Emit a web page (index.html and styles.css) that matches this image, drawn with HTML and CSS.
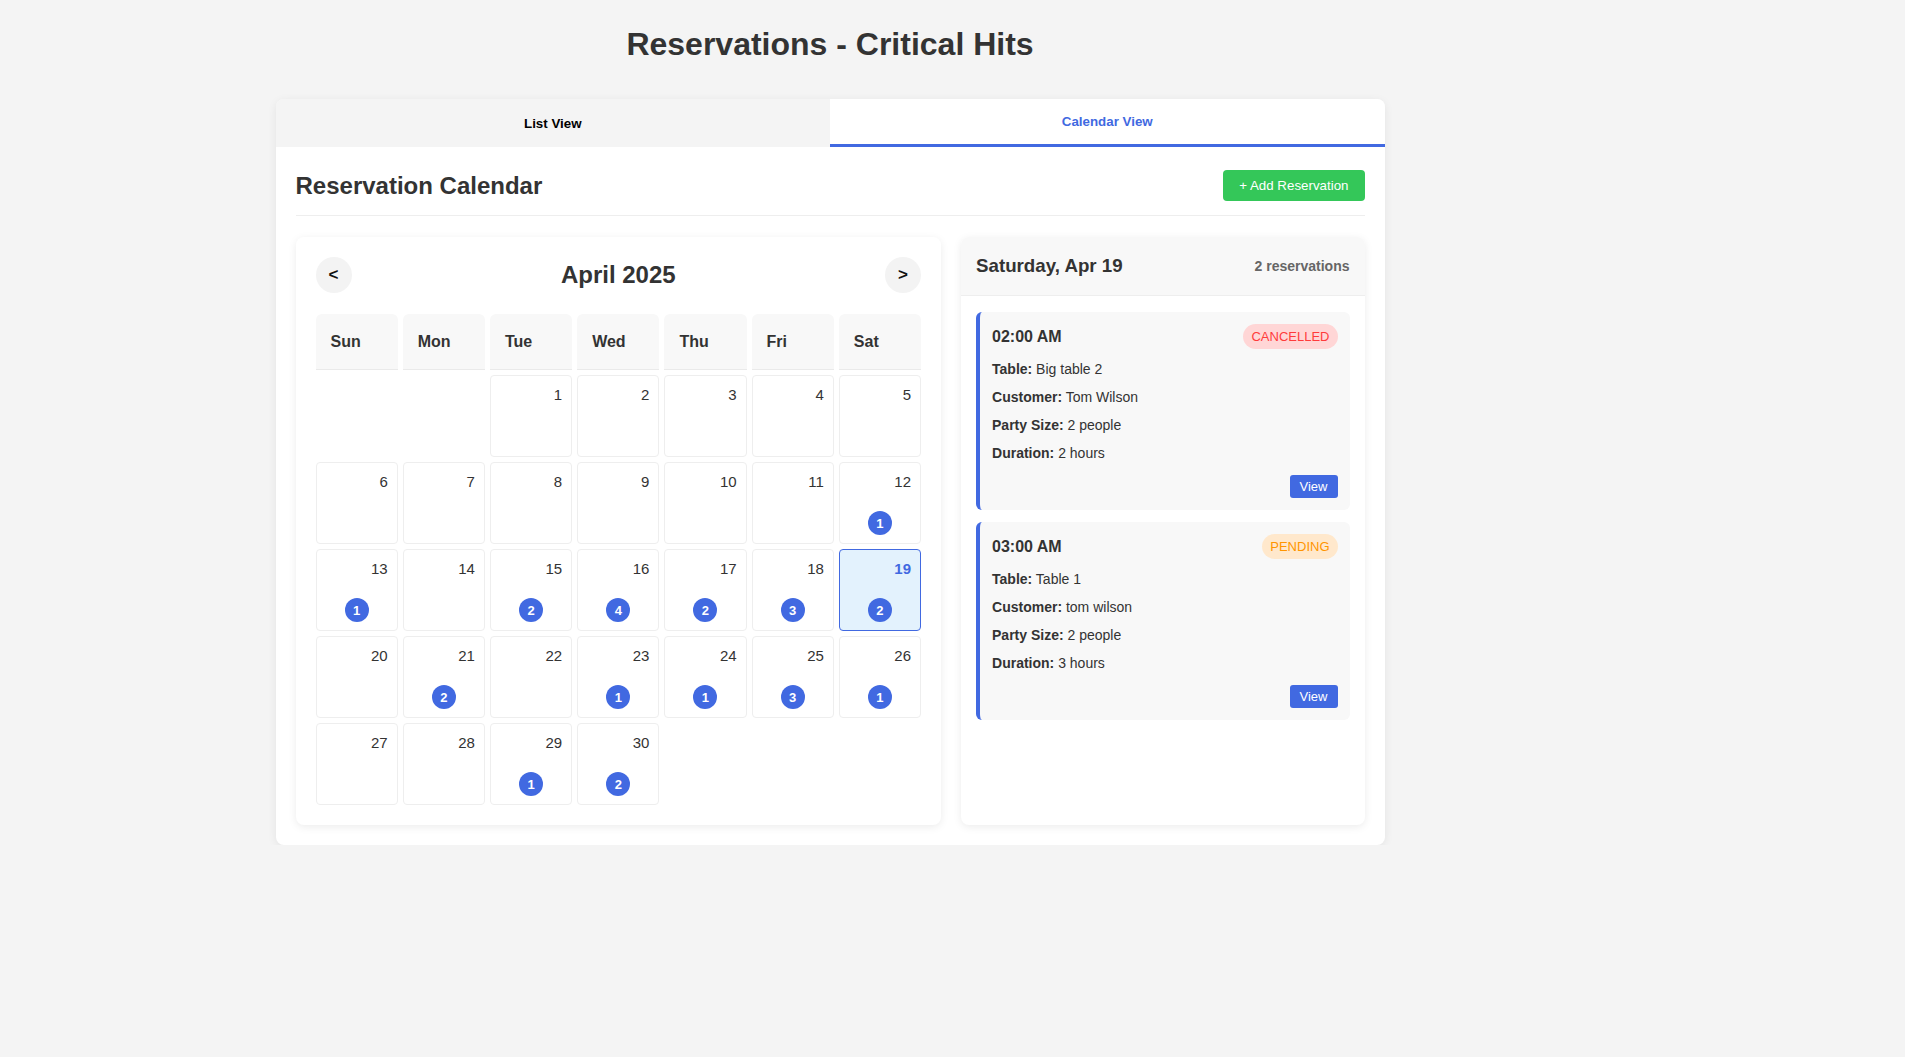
FILE: index.html
```html
<!DOCTYPE html>
<html lang="en">
<head>
<meta charset="utf-8">
<title>Reservations - Critical Hits</title>
<link rel="stylesheet" href="styles.css">
</head>
<body>
<div class="page">
  <h1 class="page-title">Reservations - Critical Hits</h1>
  <div class="app">
    <div class="tabs">
      <button class="tab">List View</button>
      <button class="tab active">Calendar View</button>
    </div>
    <div class="content">
      <div class="content-header">
        <h2 class="content-title">Reservation Calendar</h2>
        <button class="add-btn">+ Add Reservation</button>
      </div>
      <div class="layout">
        <div class="calendar">
          <div class="cal-head">
            <button class="nav-btn">&lt;</button>
            <h2 class="month">April 2025</h2>
            <button class="nav-btn">&gt;</button>
          </div>
          <div class="grid">
            <div class="weekday">Sun</div>
            <div class="weekday">Mon</div>
            <div class="weekday">Tue</div>
            <div class="weekday">Wed</div>
            <div class="weekday">Thu</div>
            <div class="weekday">Fri</div>
            <div class="weekday">Sat</div>

            <div class="day empty"></div>
            <div class="day empty"></div>
            <div class="day"><span class="num">1</span></div>
            <div class="day"><span class="num">2</span></div>
            <div class="day"><span class="num">3</span></div>
            <div class="day"><span class="num">4</span></div>
            <div class="day"><span class="num">5</span></div>

            <div class="day"><span class="num">6</span></div>
            <div class="day"><span class="num">7</span></div>
            <div class="day"><span class="num">8</span></div>
            <div class="day"><span class="num">9</span></div>
            <div class="day"><span class="num">10</span></div>
            <div class="day"><span class="num">11</span></div>
            <div class="day"><span class="num">12</span><span class="badge">1</span></div>

            <div class="day"><span class="num">13</span><span class="badge">1</span></div>
            <div class="day"><span class="num">14</span></div>
            <div class="day"><span class="num">15</span><span class="badge">2</span></div>
            <div class="day"><span class="num">16</span><span class="badge">4</span></div>
            <div class="day"><span class="num">17</span><span class="badge">2</span></div>
            <div class="day"><span class="num">18</span><span class="badge">3</span></div>
            <div class="day selected"><span class="num">19</span><span class="badge">2</span></div>

            <div class="day"><span class="num">20</span></div>
            <div class="day"><span class="num">21</span><span class="badge">2</span></div>
            <div class="day"><span class="num">22</span></div>
            <div class="day"><span class="num">23</span><span class="badge">1</span></div>
            <div class="day"><span class="num">24</span><span class="badge">1</span></div>
            <div class="day"><span class="num">25</span><span class="badge">3</span></div>
            <div class="day"><span class="num">26</span><span class="badge">1</span></div>

            <div class="day"><span class="num">27</span></div>
            <div class="day"><span class="num">28</span></div>
            <div class="day"><span class="num">29</span><span class="badge">1</span></div>
            <div class="day"><span class="num">30</span><span class="badge">2</span></div>
          </div>
        </div>

        <div class="details">
          <div class="details-head">
            <h3 class="details-title">Saturday, Apr 19</h3>
            <span class="count">2 reservations</span>
          </div>
          <div class="res-list">
            <div class="res">
              <div class="res-top">
                <span class="time">02:00 AM</span>
                <span class="status cancelled">CANCELLED</span>
              </div>
              <p><strong>Table:</strong> Big table 2</p>
              <p><strong>Customer:</strong> Tom Wilson</p>
              <p><strong>Party Size:</strong> 2 people</p>
              <p><strong>Duration:</strong> 2 hours</p>
              <div class="res-actions"><button class="view-btn">View</button></div>
            </div>
            <div class="res">
              <div class="res-top">
                <span class="time">03:00 AM</span>
                <span class="status pending">PENDING</span>
              </div>
              <p><strong>Table:</strong> Table 1</p>
              <p><strong>Customer:</strong> tom wilson</p>
              <p><strong>Party Size:</strong> 2 people</p>
              <p><strong>Duration:</strong> 3 hours</p>
              <div class="res-actions"><button class="view-btn">View</button></div>
            </div>
          </div>
        </div>
      </div>
    </div>
  </div>
</div>
</body>
</html>
```

FILE: styles.css
```css
* { box-sizing: border-box; }

body {
  margin: 0;
  background: #f4f4f4;
  font-family: "Liberation Sans", Arial, sans-serif;
  color: #333;
}

.page {
  width: 1660px;
  padding-top: 26px;
}

.page-title {
  margin: 0 0 36px;
  text-align: center;
  font-size: 32px;
  line-height: 37px;
  font-weight: bold;
  color: #333;
}

.app {
  width: 1109px;
  margin: 0 auto;
  background: #fff;
  border-radius: 8px;
  box-shadow: 0 2px 10px rgba(0, 0, 0, 0.07);
  overflow: hidden;
}

.tabs {
  display: flex;
  background: #f4f4f4;
}

.tab {
  flex: 1;
  border: 0;
  background: #f4f4f4;
  padding: 15px;
  font-family: "Liberation Sans", Arial, sans-serif;
  font-size: 13.33px;
  font-weight: bold;
  color: #000;
}

.tab.active {
  background: #fff;
  color: #4169e1;
  border-bottom: 3px solid #4169e1;
}

.content {
  padding: 23px 20px 20px;
}

.content-header {
  display: flex;
  justify-content: space-between;
  align-items: center;
  padding-bottom: 14px;
  border-bottom: 1px solid #eee;
  margin-bottom: 21px;
}

.content-title {
  margin: 0;
  font-size: 24px;
  color: #333;
}

.add-btn {
  background: #34c759;
  color: #fff;
  border: 0;
  border-radius: 4px;
  padding: 8px 16px;
  font-family: "Liberation Sans", Arial, sans-serif;
  font-size: 13.33px;
}

.layout {
  display: grid;
  grid-template-columns: 1.6fr 1fr;
  gap: 20px;
}

.calendar {
  background: #fff;
  border-radius: 8px;
  box-shadow: 0 2px 8px rgba(0, 0, 0, 0.08);
  padding: 20px;
}

.cal-head {
  display: flex;
  justify-content: space-between;
  align-items: center;
  margin-bottom: 21px;
}

.nav-btn {
  width: 36px;
  height: 36px;
  border-radius: 50%;
  border: 0;
  background: #f3f3f3;
  font-family: "Liberation Sans", Arial, sans-serif;
  font-size: 17px;
  font-weight: bold;
  color: #111;
  padding: 0;
}

.month {
  margin: 0;
  font-size: 24px;
  color: #333;
}

.grid {
  display: grid;
  grid-template-columns: repeat(7, 1fr);
  gap: 5px;
}

.weekday {
  background: #f8f8f8;
  padding: 19px 15px 18px;
  font-size: 16px;
  line-height: 18px;
  font-weight: bold;
  color: #333;
  border-bottom: 1px solid #eaeaea;
  border-radius: 6px 6px 0 0;
}

.day {
  height: 82px;
  border: 1px solid #eee;
  border-radius: 4px;
  padding: 10px 9px 8px;
  display: flex;
  flex-direction: column;
  align-items: flex-end;
}

.day.empty {
  border-color: transparent;
}

.num {
  font-size: 15px;
  line-height: 17px;
  color: #333;
}

.badge {
  margin-top: auto;
  align-self: center;
  width: 24px;
  height: 24px;
  border-radius: 50%;
  background: #4169e1;
  color: #fff;
  font-size: 13px;
  font-weight: bold;
  display: flex;
  align-items: center;
  justify-content: center;
}

.day.selected {
  background: #e3f2fd;
  border-color: #4169e1;
}

.day.selected .num {
  color: #4169e1;
  font-weight: bold;
}

.details {
  background: #fff;
  border-radius: 8px;
  box-shadow: 0 2px 8px rgba(0, 0, 0, 0.08);
  overflow: hidden;
}

.details-head {
  background: #f8f8f8;
  padding: 18px 15px;
  border-bottom: 1px solid #eee;
  display: flex;
  justify-content: space-between;
  align-items: center;
}

.details-title {
  margin: 0;
  font-size: 18.72px;
  color: #333;
}

.count {
  font-size: 14px;
  font-weight: bold;
  color: #666;
}

.res-list {
  padding: 16px 15px;
  display: flex;
  flex-direction: column;
  gap: 12px;
}

.res {
  background: #f8f8f8;
  border-left: 4px solid #4169e1;
  border-radius: 6px;
  padding: 12px;
}

.res-top {
  display: flex;
  justify-content: space-between;
  align-items: center;
  margin-bottom: 12px;
}

.time {
  font-size: 16px;
  font-weight: bold;
  color: #333;
}

.status {
  font-size: 13px;
  line-height: 15px;
  padding: 5px 8px;
  border-radius: 13px;
}

.status.cancelled {
  background: #ffd6d6;
  color: #ff3b3b;
}

.status.pending {
  background: #ffe8cc;
  color: #ff9500;
}

.res p {
  margin: 0 0 12px;
  font-size: 14px;
  line-height: 16px;
  color: #333;
}

.res p:last-of-type {
  margin-bottom: 0;
}

.res-actions {
  display: flex;
  justify-content: flex-end;
  margin-top: 14px;
}

.view-btn {
  background: #4169e1;
  color: #fff;
  border: 0;
  border-radius: 3px;
  padding: 4px 10px;
  font-family: "Liberation Sans", Arial, sans-serif;
  font-size: 13px;
  line-height: 15px;
}
```
